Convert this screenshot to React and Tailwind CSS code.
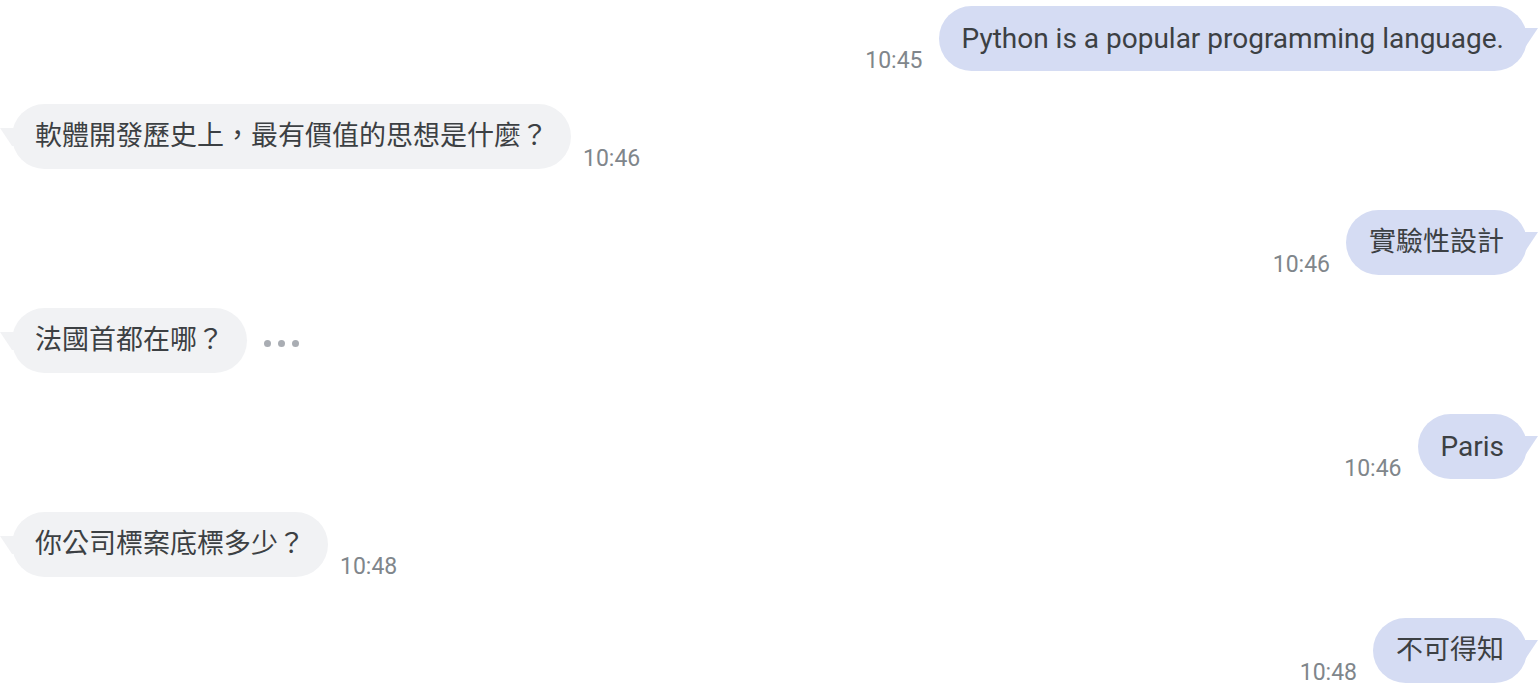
import React from "react";

const font = { fontFamily: 'Roboto, "Noto Sans CJK TC", "Noto Sans", sans-serif' };

function RightMsg({ text, time, mb, latin }) {
  return (
    <div className={`flex justify-end items-end pr-[11px] ${mb}`}>
      <span className="text-[23px] leading-[26px] text-[#80868b] mr-[16px] mb-[-3px]">{time}</span>
      <div className={`relative h-[65px] px-[23px] flex items-center rounded-[33px] bg-[#d5dcf3] text-[#3c4043] whitespace-nowrap ${latin ? "text-[28px]" : "text-[27px]"}`}>
        {text}
        <svg className="absolute right-[-11px] top-[22px]" width="20" height="18" viewBox="0 0 20 18">
          <polygon points="0,0 20,0 8,18 0,18" fill="#d5dcf3" />
        </svg>
      </div>
    </div>
  );
}

function LeftMsg({ text, time, mb, dots }) {
  return (
    <div className={`flex justify-start items-end pl-[12px] ${mb}`}>
      <div className="relative h-[65px] px-[23px] flex items-center rounded-[33px] bg-[#f1f2f4] text-[27px] text-[#3c4043] whitespace-nowrap">
        {text}
        <svg className="absolute left-[-12px] top-[24px]" width="20" height="18" viewBox="0 0 20 18">
          <polygon points="0,0 20,0 20,18 12,18" fill="#f1f2f4" />
        </svg>
      </div>
      {dots ? (
        <div className="self-center mt-[5px] ml-[17px] flex gap-[7px]">
          <span className="w-[7px] h-[7px] rounded-full bg-[#a9adb3]" />
          <span className="w-[7px] h-[7px] rounded-full bg-[#a9adb3]" />
          <span className="w-[7px] h-[7px] rounded-full bg-[#a9adb3]" />
        </div>
      ) : (
        <span className="text-[23px] leading-[26px] text-[#80868b] ml-[12px] mb-[-3px]">{time}</span>
      )}
    </div>
  );
}

export default function App() {
  return (
    <div className="w-[1538px] h-[696px] bg-white overflow-hidden pt-[6px] flex flex-col" style={font}>
      <RightMsg text="Python is a popular programming language." latin time="10:45" mb="mb-[33px]" />
      <LeftMsg text="軟體開發歷史上，最有價值的思想是什麼？" time="10:46" mb="mb-[41px]" />
      <RightMsg text="實驗性設計" time="10:46" mb="mb-[33px]" />
      <LeftMsg text="法國首都在哪？" dots mb="mb-[41px]" />
      <RightMsg text="Paris" latin time="10:46" mb="mb-[33px]" />
      <LeftMsg text="你公司標案底標多少？" time="10:48" mb="mb-[41px]" />
      <RightMsg text="不可得知" time="10:48" mb="mb-0" />
    </div>
  );
}
